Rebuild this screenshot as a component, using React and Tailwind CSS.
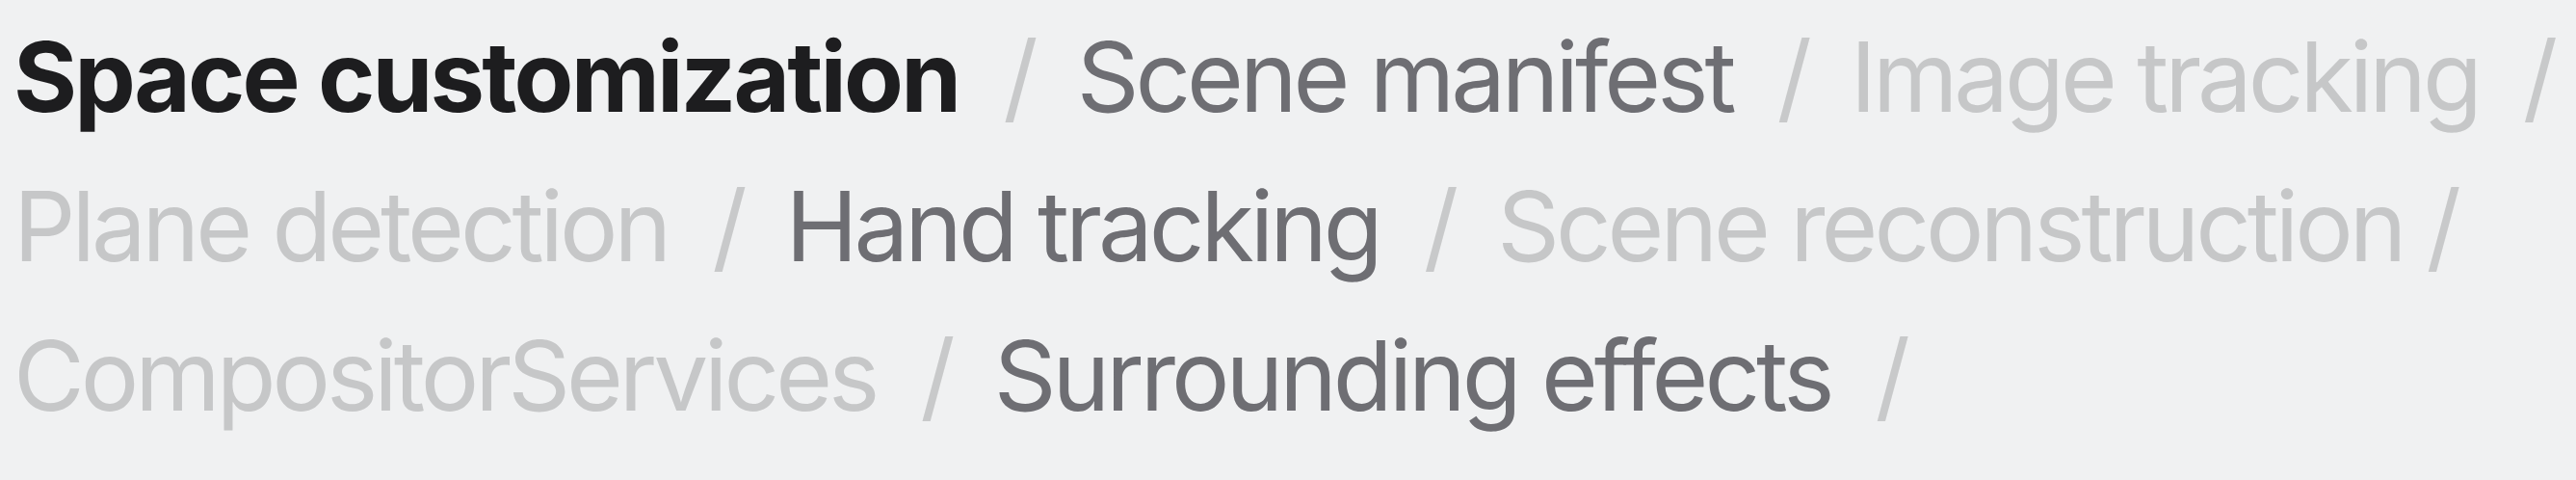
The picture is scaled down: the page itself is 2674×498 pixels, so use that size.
const items = [
  { label: 'Space customization', tone: 'current' },
  { label: 'Scene manifest', tone: 'mid' },
  { label: 'Image tracking', tone: 'light' },
  { label: 'Plane detection', tone: 'light' },
  { label: 'Hand tracking', tone: 'mid' },
  { label: 'Scene reconstruction', tone: 'light', tight: true },
  { label: 'CompositorServices', tone: 'light' },
  { label: 'Surrounding effects', tone: 'mid' },
]

const toneClass = {
  current: 'font-bold text-[#1d1d1f] tracking-[-0.028em]',
  mid: 'font-normal text-[#6e6e73] tracking-[-0.04em]',
  light: 'font-normal text-[#c6c7c8] tracking-[-0.04em]',
}

export default function App() {
  return (
    <div className="min-h-[498px] w-[2674px] overflow-hidden bg-[#f0f1f2] pl-[14px] pt-[2px] font-['Inter','Liberation_Sans',sans-serif]">
      {/* trailing slash margin may hang past the right edge */}
      <nav className="flex w-[2700px] flex-wrap text-[101px] leading-[155px]">
        {items.map((it) => (
          <span key={it.label} className="flex items-baseline whitespace-nowrap">
            <span className={toneClass[it.tone]}>{it.label}</span>
            <span
              className={
                'font-normal text-[#c8c9ca] ' + (it.tight ? 'ml-[24px] mr-[40px]' : 'ml-[46px] mr-[40px]')
              }
            >
              /
            </span>
          </span>
        ))}
      </nav>
    </div>
  )
}
